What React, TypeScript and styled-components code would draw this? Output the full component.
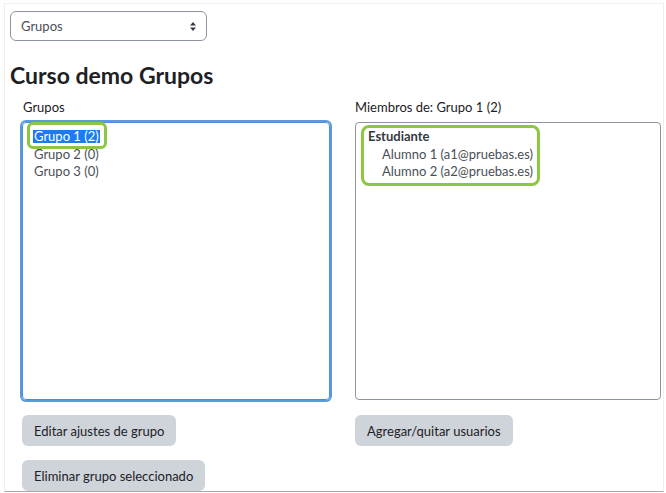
import styled, { createGlobalStyle } from "styled-components";

const GlobalStyle = createGlobalStyle`
  html, body {
    margin: 0;
    padding: 0;
    background: #fff;
  }
  body {
    font-family: Lato, "Noto Sans", "Liberation Sans", sans-serif;
    color: #1d2125;
  }
`;

// Page frame with its faint edges
const Frame = styled.div`
  box-sizing: border-box;
  margin: 3px 2px 0 4px;
  height: 489px;
  border: 1px solid #efefef;
  border-bottom: 1px solid #a8a8a8;
  padding: 7px 0 0 5px;
  overflow: hidden;
`;

const SelectBox = styled.div`
  box-sizing: border-box;
  width: 197px;
  height: 30px;
  border: 1px solid #8f959e;
  border-radius: 6px;
  display: flex;
  align-items: center;
  justify-content: space-between;
  padding: 0 10px 0 10px;
  font-size: 13px;
  color: #495057;
`;

const Title = styled.h2`
  margin: 21px 0 0;
  font-size: 23px;
  line-height: 27px;
  font-weight: 700;
  color: #1d2125;
`;

const Columns = styled.div`
  display: grid;
  grid-template-columns: 308px 306px;
  column-gap: 25px;
  margin: 10px 0 0 12px;
`;

const Column = styled.div`
  display: flex;
  flex-direction: column;
  align-items: flex-start;
`;

const Label = styled.div<{ $indent?: number }>`
  font-size: 13px;
  line-height: 17px;
  padding-left: ${(p) => p.$indent ?? 0}px;
  color: #1d2125;
`;

const ListBox = styled.div<{ $focused?: boolean }>`
  box-sizing: border-box;
  align-self: stretch;
  height: 278px;
  margin-top: 6px;
  border: 1px solid ${(p) => (p.$focused ? "#4a8fd6" : "#8f959e")};
  border-radius: 4px;
  box-shadow: ${(p) => (p.$focused ? "0 0 0 2px #5b9bdb" : "none")};
  padding: 5px 0 0 ${(p) => (p.$focused ? 11 : 12)}px;
  font-size: 13px;
  line-height: 17.6px;
  color: #495057;
`;

const Option = styled.div<{ $indent?: number; $bold?: boolean }>`
  padding-left: ${(p) => p.$indent ?? 0}px;
  font-weight: ${(p) => (p.$bold ? 700 : 400)};
  color: ${(p) => (p.$bold ? "#343a40" : "#495057")};
  white-space: nowrap;
`;

const Selected = styled.span`
  position: relative;
  display: inline-block;
  line-height: 13px;
  padding: 0 1px;
  margin-left: -1px;
  background: #1a7cf0;
  color: #fff;
`;

// green annotation outlines drawn over the content
const Mark = styled.span`
  position: absolute;
  border: 3px solid #8dc641;
  border-radius: 6px;
  pointer-events: none;
`;

const MarkOption = styled(Mark)`
  inset: -8px -7px -6px -6px;
`;

const MemberGroup = styled.div`
  position: relative;
  display: inline-block;
`;

const MarkMembers = styled(Mark)`
  inset: -3px -7px -5px -7px;
  border-radius: 8px;
`;

const Button = styled.button`
  box-sizing: border-box;
  height: 31px;
  margin-top: 15px;
  padding: 0 12px;
  border: none;
  border-radius: 6px;
  background: #ced4da;
  color: #1d2125;
  font-family: inherit;
  font-size: 13px;
  cursor: pointer;

  & + & {
    margin-top: 14px;
  }
`;

function Arrows() {
  return (
    <svg width="6" height="9" viewBox="0 0 6 9">
      <path d="M3 0 L6 3.5 H0 Z" fill="#343a40" />
      <path d="M3 9 L6 5.5 H0 Z" fill="#343a40" />
    </svg>
  );
}

export default function App() {
  return (
    <>
      <GlobalStyle />
      <Frame>
        <SelectBox>
          <span>Grupos</span>
          <Arrows />
        </SelectBox>
        <Title>Curso demo Grupos</Title>
        <Columns>
          <Column>
            <Label $indent={1}>Grupos</Label>
            <ListBox $focused>
              <Option>
                <Selected>
                  Grupo 1 (2)
                  <MarkOption />
                </Selected>
              </Option>
              <Option>Grupo 2 (0)</Option>
              <Option>Grupo 3 (0)</Option>
            </ListBox>
            <Button>Editar ajustes de grupo</Button>
            <Button>Eliminar grupo seleccionado</Button>
          </Column>
          <Column>
            <Label>Miembros de: Grupo 1 (2)</Label>
            <ListBox>
              <MemberGroup>
                <Option $bold>Estudiante</Option>
                <Option $indent={14}>Alumno 1 (a1@pruebas.es)</Option>
                <Option $indent={14}>Alumno 2 (a2@pruebas.es)</Option>
                <MarkMembers />
              </MemberGroup>
            </ListBox>
            <Button>Agregar/quitar usuarios</Button>
          </Column>
        </Columns>
      </Frame>
    </>
  );
}
